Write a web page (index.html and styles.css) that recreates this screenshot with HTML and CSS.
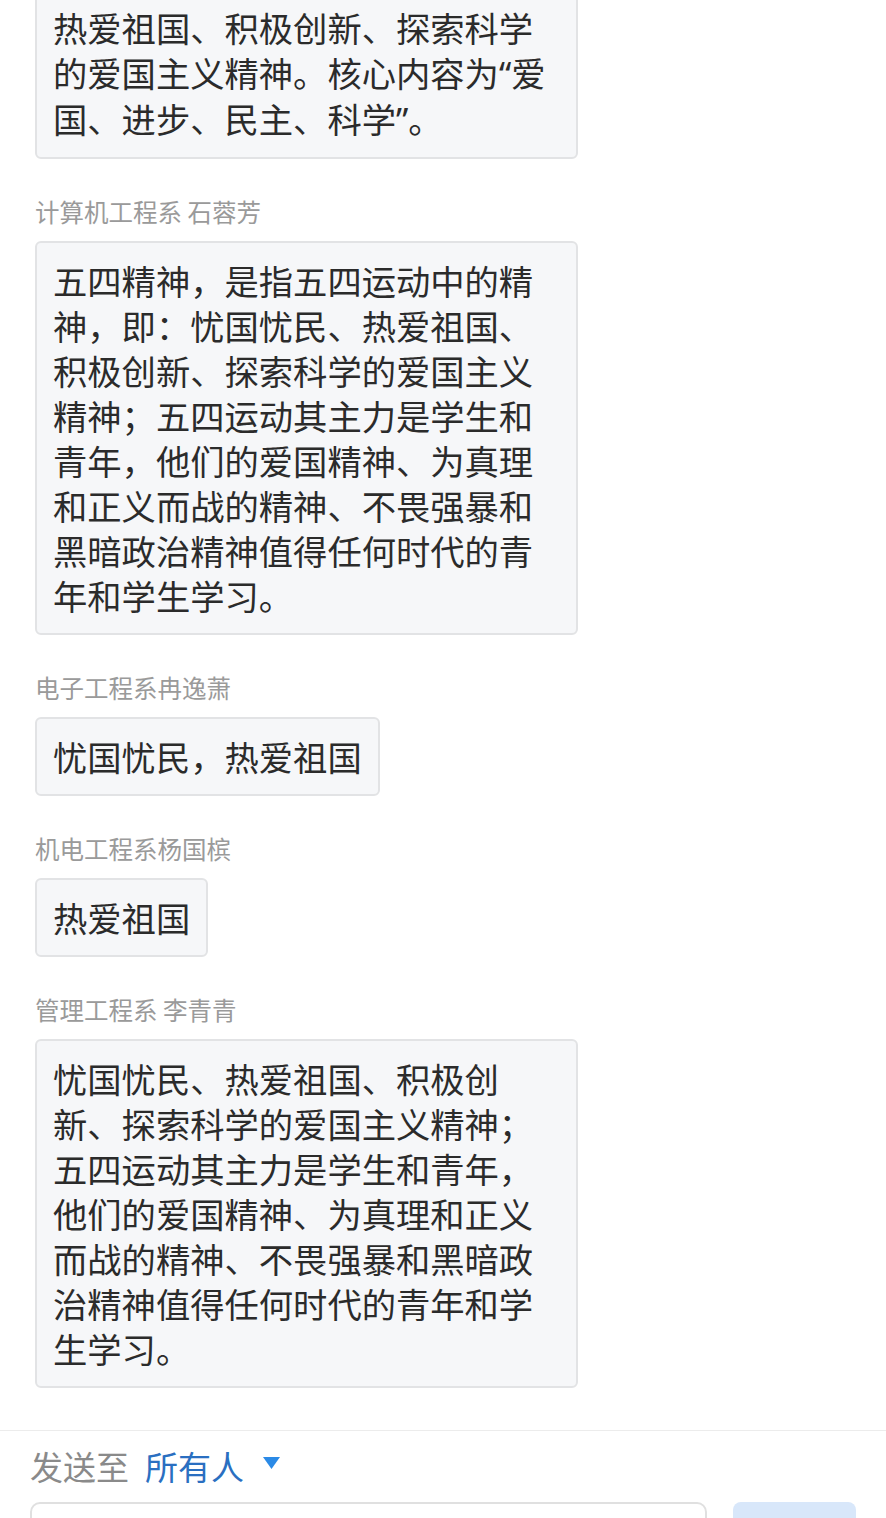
FILE: index.html
```html
<!DOCTYPE html>
<html lang="zh-CN">
<head>
    <meta charset="UTF-8">
    <meta name="viewport" content="width=device-width, initial-scale=1.0">
    <title>讨论区</title>
    <link rel="stylesheet" href="styles.css">
</head>
<body>
    <div class="chat-list">
        <div class="message first">
            <div class="bubble">热爱祖国、积极创新、探索科学的爱国主义精神。核心内容为<span class="quote">“</span>爱国、进步、民主、科学<span class="quote">”</span>。</div>
        </div>
        <div class="message">
            <div class="sender">计算机工程系 石蓉芳</div>
            <div class="bubble">五四精神，是指五四运动中的精神，即：忧国忧民、热爱祖国、积极创新、探索科学的爱国主义精神；五四运动其主力是学生和青年，他们的爱国精神、为真理和正义而战的精神、不畏强暴和黑暗政治精神值得任何时代的青年和学生学习。</div>
        </div>
        <div class="message">
            <div class="sender">电子工程系冉逸萧</div>
            <div class="bubble">忧国忧民，热爱祖国</div>
        </div>
        <div class="message">
            <div class="sender">机电工程系杨国槟</div>
            <div class="bubble">热爱祖国</div>
        </div>
        <div class="message">
            <div class="sender">管理工程系 李青青</div>
            <div class="bubble">忧国忧民、热爱祖国、积极创新、探索科学的爱国主义精神；五四运动其主力是学生和青年，他们的爱国精神、为真理和正义而战的精神、不畏强暴和黑暗政治精神值得任何时代的青年和学生学习。</div>
        </div>
    </div>
    <div class="composer">
        <div class="send-to">
            <span class="label">发送至</span>
            <span class="target">所有人</span>
            <svg class="caret" width="17" height="12" viewBox="0 0 17 12"><polygon points="0,0 17,0 8.5,12" fill="#2b8ae6"/></svg>
        </div>
        <div class="input-row">
            <div class="input-box"></div>
            <div class="send-btn"></div>
        </div>
    </div>
</body>
</html>
```

FILE: styles.css
```css
/* General Styles */
body {
    margin: 0;
    font-family: "Noto Sans CJK SC", "Noto Sans", sans-serif;
    background: #fff;
    color: #333;
    overflow: hidden;
}

.chat-list {
    margin-top: -12px;
    padding: 0 35px 42px;
}

.message {
    margin-top: 37px;
}

.message.first {
    margin-top: 0;
}

.sender {
    font-size: 24.5px;
    line-height: 32px;
    color: #9a9a9a;
    margin-bottom: 13px;
}

.bubble {
    width: fit-content;
    max-width: 543px;
    box-sizing: border-box;
    padding: 15px 16px;
    font-size: 34.3px;
    line-height: 45px;
    color: #2b2b2b;
    background: #f6f7f9;
    border: 2px solid #e2e3e5;
    border-radius: 6px;
}

.quote {
    font-family: "Noto Sans", sans-serif;
}

.composer {
    border-top: 1px solid #ececec;
    padding: 15px 30px 0;
}

.send-to {
    display: flex;
    align-items: center;
    font-size: 33px;
    line-height: 40px;
}

.send-to .label {
    color: #8a8a8a;
}

.send-to .target {
    color: #2a6fc1;
    margin-left: 16px;
}

.caret {
    margin-left: 19px;
    margin-top: -6px;
}

.input-row {
    display: flex;
    gap: 26px;
    margin-top: 16px;
}

.input-box {
    width: 677px;
    height: 80px;
    box-sizing: border-box;
    border: 2px solid #e0e0e0;
    border-radius: 10px;
}

.send-btn {
    width: 123px;
    height: 80px;
    background: #d8e7fa;
    border-radius: 8px;
}
```
